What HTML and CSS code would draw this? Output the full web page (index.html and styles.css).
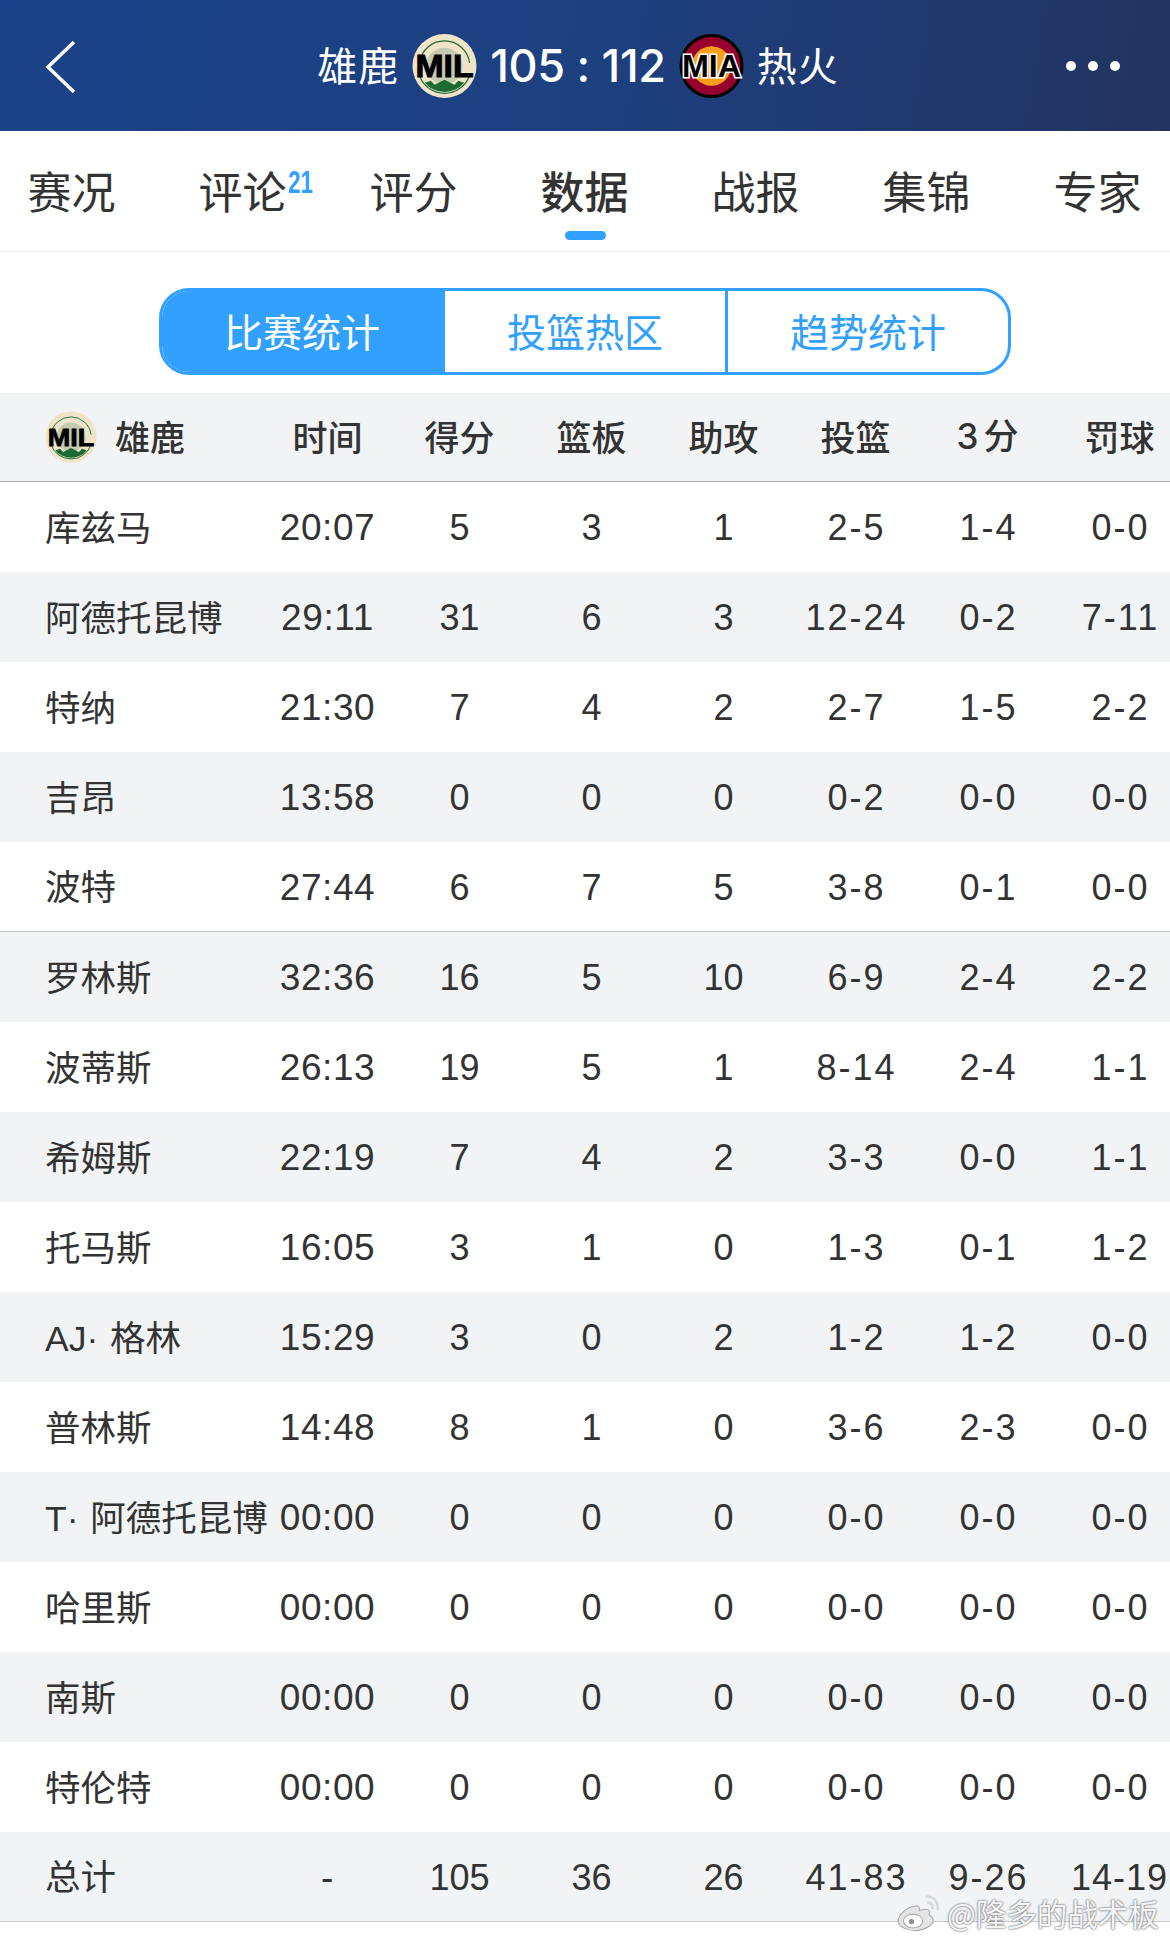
FILE: index.html
```html
<!DOCTYPE html>
<html lang="zh">
<head>
<meta charset="utf-8">
<title>雄鹿 105 : 112 热火</title>
<link rel="stylesheet" href="styles.css">
</head>
<body>
<svg class="defs" width="0" height="0" aria-hidden="true">
  <symbol id="mil" viewBox="0 0 66 66">
    <circle cx="33" cy="33" r="32.5" fill="#efe4c8"/>
    <circle cx="33" cy="33" r="18.500" fill="#c5cbb0"/>
    <path d="M7.500 30A25.700 25.700 0 0 1 58.500 30" fill="none" stroke="#1c6b32" stroke-width="1.200"/>
    <path d="M8 44A27 27 0 0 0 58 44" fill="none" stroke="#1c6b32" stroke-width="1.200"/>
    <path d="M13 50A26 26 0 0 0 53 50L47 48 43 52 33 47 23 52 19 48Z" fill="#1c6b32"/>
    <text class="logo-text" x="33" y="44" text-anchor="middle" font-size="31" textLength="59" lengthAdjust="spacingAndGlyphs" fill="#000" stroke="#000" stroke-width="1">MIL</text>
  </symbol>
  <symbol id="mia" viewBox="0 0 66 66">
    <circle cx="33" cy="33" r="31" fill="#98002e" stroke="#000" stroke-width="3"/>
    <circle cx="33" cy="33" r="20" fill="#f9a01b"/>
    <text class="logo-text" x="33" y="44" text-anchor="middle" font-size="31" textLength="60" lengthAdjust="spacingAndGlyphs" fill="#000" stroke="#fff" stroke-width="3" paint-order="stroke">MIA</text>
  </symbol>
</svg>
<main class="page">
  <header class="topbar">
    <svg class="back" viewBox="0 0 31 54"><path d="M29 2 3 27l26 25" fill="none" stroke="#fff" stroke-width="3.500"/></svg>
    <div class="match">
      <span class="team">雄鹿</span>
      <svg class="logo"><use href="#mil"/></svg>
      <span class="score">105 : 112</span>
      <svg class="logo"><use href="#mia"/></svg>
      <span class="team">热火</span>
    </div>
    <div class="more"><i></i><i></i><i></i></div>
  </header>

  <nav class="tabs">
    <a class="tab">赛况</a>
    <a class="tab">评论<sup class="badge">21</sup></a>
    <a class="tab">评分</a>
    <a class="tab active">数据</a>
    <a class="tab">战报</a>
    <a class="tab">集锦</a>
    <a class="tab">专家</a>
  </nav>

  <div class="seg-wrap">
    <div class="seg">
      <span class="seg-item on">比赛统计</span>
      <span class="seg-item">投篮热区</span>
      <span class="seg-item">趋势统计</span>
    </div>
  </div>

  <section class="table">
    <div class="row head">
      <div class="name"><svg class="logo-sm"><use href="#mil"/></svg>雄鹿</div>
      <div>时间</div><div>得分</div><div>篮板</div><div>助攻</div><div>投篮</div><div><span class="num3">3</span><span class="fen">分</span></div><div>罚球</div>
    </div>
    <div class="row"><div class="name">库兹马</div><div>20:07</div><div>5</div><div>3</div><div>1</div><div>2-5</div><div>1-4</div><div>0-0</div></div>
    <div class="row"><div class="name">阿德托昆博</div><div>29:11</div><div>31</div><div>6</div><div>3</div><div>12-24</div><div>0-2</div><div>7-11</div></div>
    <div class="row"><div class="name">特纳</div><div>21:30</div><div>7</div><div>4</div><div>2</div><div>2-7</div><div>1-5</div><div>2-2</div></div>
    <div class="row"><div class="name">吉昂</div><div>13:58</div><div>0</div><div>0</div><div>0</div><div>0-2</div><div>0-0</div><div>0-0</div></div>
    <div class="row last-starter"><div class="name">波特</div><div>27:44</div><div>6</div><div>7</div><div>5</div><div>3-8</div><div>0-1</div><div>0-0</div></div>
    <div class="row"><div class="name">罗林斯</div><div>32:36</div><div>16</div><div>5</div><div>10</div><div>6-9</div><div>2-4</div><div>2-2</div></div>
    <div class="row"><div class="name">波蒂斯</div><div>26:13</div><div>19</div><div>5</div><div>1</div><div>8-14</div><div>2-4</div><div>1-1</div></div>
    <div class="row"><div class="name">希姆斯</div><div>22:19</div><div>7</div><div>4</div><div>2</div><div>3-3</div><div>0-0</div><div>1-1</div></div>
    <div class="row"><div class="name">托马斯</div><div>16:05</div><div>3</div><div>1</div><div>0</div><div>1-3</div><div>0-1</div><div>1-2</div></div>
    <div class="row"><div class="name">AJ· 格林</div><div>15:29</div><div>3</div><div>0</div><div>2</div><div>1-2</div><div>1-2</div><div>0-0</div></div>
    <div class="row"><div class="name">普林斯</div><div>14:48</div><div>8</div><div>1</div><div>0</div><div>3-6</div><div>2-3</div><div>0-0</div></div>
    <div class="row"><div class="name">T· 阿德托昆博</div><div>00:00</div><div>0</div><div>0</div><div>0</div><div>0-0</div><div>0-0</div><div>0-0</div></div>
    <div class="row"><div class="name">哈里斯</div><div>00:00</div><div>0</div><div>0</div><div>0</div><div>0-0</div><div>0-0</div><div>0-0</div></div>
    <div class="row"><div class="name">南斯</div><div>00:00</div><div>0</div><div>0</div><div>0</div><div>0-0</div><div>0-0</div><div>0-0</div></div>
    <div class="row"><div class="name">特伦特</div><div>00:00</div><div>0</div><div>0</div><div>0</div><div>0-0</div><div>0-0</div><div>0-0</div></div>
    <div class="row total"><div class="name">总计</div><div>-</div><div>105</div><div>36</div><div>26</div><div>41-83</div><div>9-26</div><div>14-19</div></div>
  </section>

  <div class="watermark">
    <svg class="weibo" viewBox="0 0 44 36">
      <path d="M18 12C10 13 2 20 2 26c0 5 8 9 16 9s17-5 17-10c0-3-3-4-4-5 1-3 0-5-3-5-3 0-5 1-6 1 0-3-1-5-4-4Z" fill="#e4e4e6" stroke="#a9a9ad" stroke-width="1"/>
      <ellipse cx="16" cy="26" rx="9" ry="6.500" fill="#fff" stroke="#a9a9ad" stroke-width="1"/>
      <circle cx="14.500" cy="26.500" r="2.500" fill="#8e8e92"/>
      <path d="M29 3c6 0 11 5 10 12M30 9c3 0 5 2 4 5" fill="none" stroke="#d9d9dc" stroke-width="2.500" stroke-linecap="round"/>
    </svg>
    <span class="mark-text">@隆多的战术板</span>
  </div>
</main>
</body>
</html>
```
FILE: styles.css
```css
* { box-sizing: border-box; }
html, body { margin: 0; padding: 0; background: #fff; }
body {
  font-family: "Liberation Sans", "Noto Sans CJK SC", sans-serif;
  color: #333;
}
.defs { position: absolute; }
.logo-text { font-family: "Liberation Sans", sans-serif; font-weight: 700; }

.page { position: relative; width: 1170px; height: 1942px; overflow: hidden; }

/* top bar */
.topbar {
  position: relative;
  height: 131px;
  display: flex;
  align-items: center;
  justify-content: center;
  background: linear-gradient(100deg, #1b4288 0%, #1d4080 50%, #22335f 100%);
  color: #fff;
}
.back { position: absolute; left: 45px; top: 40px; width: 31px; height: 54px; }
.match { display: flex; align-items: center; gap: 13px; margin-left: -14px; }
.team { font-family: "Noto Sans CJK SC", sans-serif; font-size: 40px; line-height: 1; letter-spacing: 1px; padding-bottom: 4px; }
.logo { width: 65px; height: 66px; display: block; }
.score { font-size: 45px; line-height: 1; font-family: "Inter", "Liberation Sans", sans-serif; font-weight: 500; letter-spacing: -0.300px; }
.more { position: absolute; left: 1066px; top: 61px; display: flex; gap: 12px; }
.more i { display: block; width: 10px; height: 10px; border-radius: 50%; background: #fff; }

/* tabs */
.tabs {
  display: flex;
  height: 121px;
  margin-left: -14px;
  width: 1198px;
  border-bottom: 1px solid #eee;
}
.tab {
  position: relative;
  flex: 0 0 171px;
  padding-top: 34px;
  text-align: center;
  font-family: "Noto Sans CJK SC", sans-serif;
  font-size: 44px;
  line-height: 50px;
  color: #333;
}
.tab.active { font-weight: 500; }
.tab.active::after {
  content: "";
  position: absolute;
  left: 66px;
  top: 100px;
  width: 41px;
  height: 9px;
  border-radius: 5px;
  background: #32a0ff;
}
.badge {
  position: absolute;
  left: 131px;
  top: 38px;
  font-family: "Liberation Sans", sans-serif;
  font-size: 31px;
  line-height: 28px;
  font-weight: 700;
  color: #32a0ff;
  transform: scaleX(0.72);
  transform-origin: left center;
}

/* segmented control */
.seg-wrap { height: 141px; padding: 36px 159px 0; }
.seg {
  display: flex;
  height: 87px;
  border: 3px solid #32a0ff;
  border-radius: 30px;
  overflow: hidden;
}
.seg-item {
  flex: 1 1 0;
  display: flex;
  align-items: center;
  justify-content: center;
  padding-bottom: 4px;
  font-family: "Noto Sans CJK SC", sans-serif;
  font-size: 39px;
  color: #32a0ff;
  border-left: 3px solid #32a0ff;
}
.seg-item.on { background: #32a0ff; color: #fff; border-left: 0; }

/* table */
.table { width: 1185px; }
.row {
  display: grid;
  grid-template-columns: 261.5px repeat(7, 132px);
  height: 90px;
  padding-top: 2px;
  align-items: center;
  text-align: center;
  font-size: 36px;
  font-family: "Liberation Sans", "Noto Sans CJK SC", sans-serif;
  white-space: nowrap;
}
.row:nth-child(odd) { background: #f2f3f5; }
.row:not(.head) > :nth-child(2) { font-size: 37px; letter-spacing: 0.6px; }
.row:not(.head) > :nth-child(n+6) { letter-spacing: 2px; padding-left: 2px; }
.row.total > :nth-child(8) { letter-spacing: 1px; padding-left: 0; }
.row .name {
  text-align: left;
  padding-left: 45px;
  padding-bottom: 6px;
  font-family: "Liberation Sans", "Noto Sans CJK SC", sans-serif;
  font-size: 35.5px;
  word-spacing: 2px;
  display: flex;
  align-items: center;
}
.head {
  height: 89px;
  padding-top: 0;
  padding-bottom: 4px;
  border-bottom: 1px solid #a9abb3;
  font-family: "Noto Sans CJK SC", sans-serif;
  font-size: 35px;
  font-weight: 500;
  line-height: 1;
  background: #f2f3f5;
}
.row.head:nth-child(odd) { background: #f2f3f5; }
.row.head .name { font-weight: 500; font-family: "Noto Sans CJK SC", sans-serif; font-size: 35px; padding-bottom: 0; }
.logo-sm { width: 52px; height: 52px; margin: 4px 18px 0 0; display: block; flex: none; }
.num3 { font-family: "Inter", sans-serif; }
.fen { margin-left: 5px; }
.last-starter { border-bottom: 1px solid #bfc0c5; }
.total { border-bottom: 1px solid #c9cacd; }

/* watermark */
.watermark {
  position: absolute;
  left: 896px;
  top: 1893px;
  display: flex;
  align-items: center;
  gap: 4px;
}
.weibo { width: 47px; height: 39px; display: block; }
.mark-text {
  font-family: "Noto Sans CJK SC", sans-serif;
  font-size: 30.5px;
  line-height: 36px;
  color: #f4f4f5;
  text-shadow: 0 0 2px #77777c, 0 0 2px #77777c;
  white-space: nowrap;
}
```
